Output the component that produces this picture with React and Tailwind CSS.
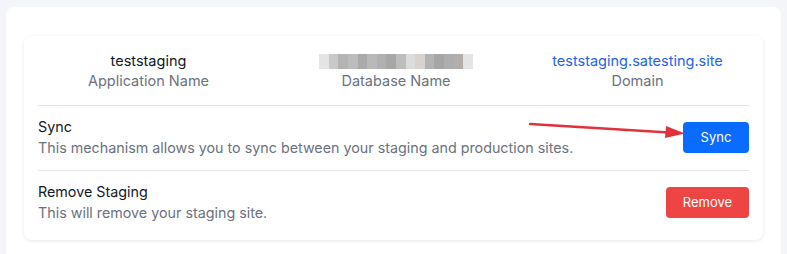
import React from 'react';

const blur = ['#e4e4e4', '#c9c9c9', '#b4b4b4', '#bcbcbc', '#aaaaaa', '#b9b9b9', '#b0b0b0', '#a7a7a7', '#bdbdbd', '#dcdcdc', '#d6d3d0', '#b3b3b3', '#a5a5a5', '#adadad', '#b1aeab', '#e2e4e6'];

function Blurred() {
  return (
    <div className="flex h-[15px]">
      {blur.map((c, i) => (
        <div key={i} className="h-full w-[9.6px]" style={{ background: c }} />
      ))}
    </div>
  );
}

export default function App() {
  return (
    <div className="h-[254px] w-[787px] overflow-hidden bg-[#f4f5f9] pl-[6px] pr-[6px] pt-[7px] font-['Inter',sans-serif]">
      <div className="h-[300px] rounded-lg bg-white px-[18px] pt-[29px]">
        <div className="relative rounded-lg bg-white px-[14px] pb-[17px] shadow-[0_1px_4px_rgba(0,0,0,0.09)]">
          <div className="grid grid-cols-3 pb-[14px] pt-[15px] text-center text-[14.5px] leading-[20px]">
            <div className="pr-[16px]">
              <div className="text-[#111827]">teststaging</div>
              <div className="text-[#6b7280]">Application Name</div>
            </div>
            <div className="flex flex-col items-center pl-[5px]">
              <div className="flex h-[20px] items-center">
                <Blurred />
              </div>
              <div className="text-[#6b7280]">Database Name</div>
            </div>
            <div className="pl-[14px]">
              <div className="text-[#2563eb]">teststaging.satesting.site</div>
              <div className="text-[#6b7280]">Domain</div>
            </div>
          </div>
          <div className="flex items-center justify-between border-t border-[#e5e7eb] pb-[12px] pt-[10px] text-[14.3px] leading-[21px]">
            <div>
              <div className="text-[#111827]">Sync</div>
              <div className="text-[#6b7280]">This mechanism allows you to sync between your staging and production sites.</div>
            </div>
            <button className="h-[31px] w-[66px] rounded-[4px] bg-[#0a6cff] text-[13px] text-white">Sync</button>
          </div>
          <div className="flex items-center justify-between border-t border-[#e5e7eb] pt-[10px] text-[14.3px] leading-[21px]">
            <div>
              <div className="text-[#111827]">Remove Staging</div>
              <div className="text-[#6b7280]">This will remove your staging site.</div>
            </div>
            <button className="h-[31px] w-[83px] rounded-[4px] bg-[#ef4444] text-[13px] text-white">Remove</button>
          </div>
          <svg className="absolute left-[505px] top-[82px]" width="160" height="20" viewBox="0 0 160 20">
            <line x1="1" y1="6" x2="148" y2="15" stroke="#e0323c" strokeWidth="2.5" strokeLinecap="round" />
            <path d="M137 8 L156 15.5 L136 20 Z" fill="#e0323c" />
          </svg>
        </div>
      </div>
    </div>
  );
}
